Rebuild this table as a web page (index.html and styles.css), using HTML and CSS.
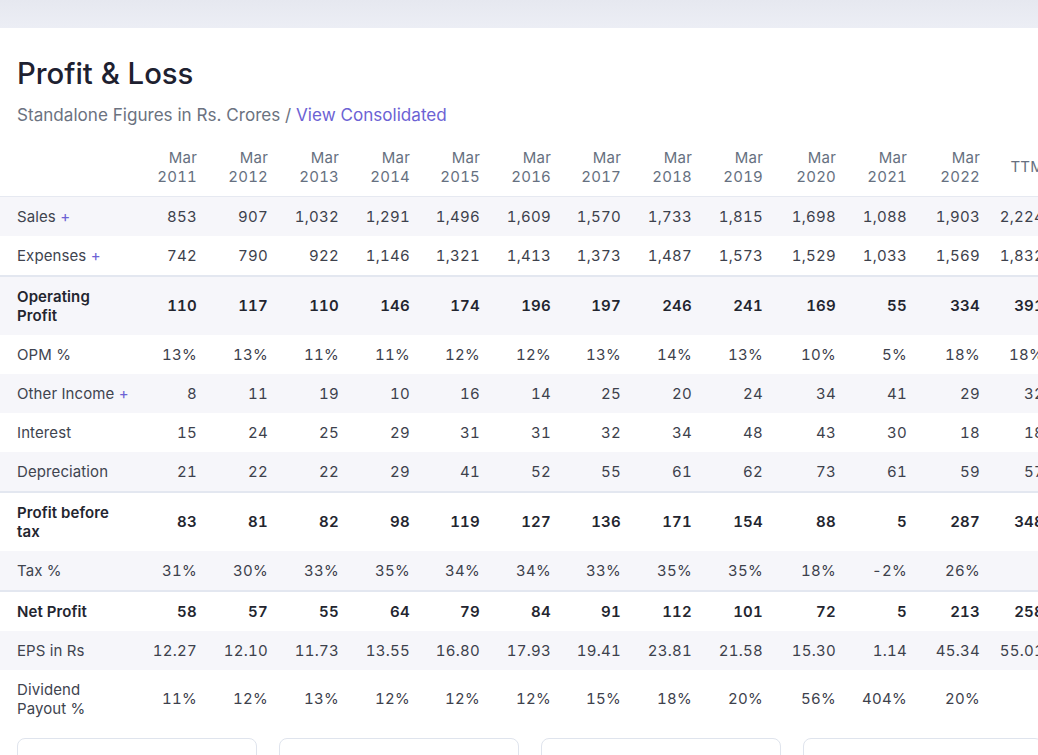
FILE: index.html
```html
<!DOCTYPE html>
<html>
<head>
<meta charset="utf-8">
<link rel="stylesheet" href="styles.css">
</head>
<body>
<div class="topbar"></div>
<section class="card">
  <h2 class="title">Profit &amp; Loss</h2>
  <p class="subtitle">Standalone Figures in Rs. Crores / <a class="link">View Consolidated</a></p>
  <div class="table-wrap">
    <table class="data">
      <colgroup>
        <col style="width:141px"><col style="width:71px"><col style="width:71px"><col style="width:71px"><col style="width:71px"><col style="width:70px"><col style="width:71px"><col style="width:70px"><col style="width:71px"><col style="width:71px"><col style="width:73px"><col style="width:71px"><col style="width:73px"><col style="width:64px">
      </colgroup>
      <thead>
        <tr>
          <th class="label"></th>
          <th>Mar<br>2011</th><th>Mar<br>2012</th><th>Mar<br>2013</th><th>Mar<br>2014</th><th>Mar<br>2015</th><th>Mar<br>2016</th><th>Mar<br>2017</th><th>Mar<br>2018</th><th>Mar<br>2019</th><th>Mar<br>2020</th><th>Mar<br>2021</th><th>Mar<br>2022</th><th>TTM</th>
        </tr>
      </thead>
      <tbody>
        <tr class="stripe">
          <td class="label">Sales <span class="plus">+</span></td>
          <td>853</td><td>907</td><td>1,032</td><td>1,291</td><td>1,496</td><td>1,609</td><td>1,570</td><td>1,733</td><td>1,815</td><td>1,698</td><td>1,088</td><td>1,903</td><td>2,224</td>
        </tr>
        <tr>
          <td class="label">Expenses <span class="plus">+</span></td>
          <td>742</td><td>790</td><td>922</td><td>1,146</td><td>1,321</td><td>1,413</td><td>1,373</td><td>1,487</td><td>1,573</td><td>1,529</td><td>1,033</td><td>1,569</td><td>1,832</td>
        </tr>
        <tr class="stripe strong sep">
          <td class="label">Operating Profit</td>
          <td>110</td><td>117</td><td>110</td><td>146</td><td>174</td><td>196</td><td>197</td><td>246</td><td>241</td><td>169</td><td>55</td><td>334</td><td>391</td>
        </tr>
        <tr>
          <td class="label">OPM %</td>
          <td>13%</td><td>13%</td><td>11%</td><td>11%</td><td>12%</td><td>12%</td><td>13%</td><td>14%</td><td>13%</td><td>10%</td><td>5%</td><td>18%</td><td>18%</td>
        </tr>
        <tr class="stripe">
          <td class="label">Other Income <span class="plus">+</span></td>
          <td>8</td><td>11</td><td>19</td><td>10</td><td>16</td><td>14</td><td>25</td><td>20</td><td>24</td><td>34</td><td>41</td><td>29</td><td>32</td>
        </tr>
        <tr>
          <td class="label">Interest</td>
          <td>15</td><td>24</td><td>25</td><td>29</td><td>31</td><td>31</td><td>32</td><td>34</td><td>48</td><td>43</td><td>30</td><td>18</td><td>18</td>
        </tr>
        <tr class="stripe">
          <td class="label">Depreciation</td>
          <td>21</td><td>22</td><td>22</td><td>29</td><td>41</td><td>52</td><td>55</td><td>61</td><td>62</td><td>73</td><td>61</td><td>59</td><td>57</td>
        </tr>
        <tr class="strong sep">
          <td class="label">Profit before tax</td>
          <td>83</td><td>81</td><td>82</td><td>98</td><td>119</td><td>127</td><td>136</td><td>171</td><td>154</td><td>88</td><td>5</td><td>287</td><td>348</td>
        </tr>
        <tr class="stripe">
          <td class="label">Tax %</td>
          <td>31%</td><td>30%</td><td>33%</td><td>35%</td><td>34%</td><td>34%</td><td>33%</td><td>35%</td><td>35%</td><td>18%</td><td>-2%</td><td>26%</td><td></td>
        </tr>
        <tr class="strong sep">
          <td class="label">Net Profit</td>
          <td>58</td><td>57</td><td>55</td><td>64</td><td>79</td><td>84</td><td>91</td><td>112</td><td>101</td><td>72</td><td>5</td><td>213</td><td>258</td>
        </tr>
        <tr class="stripe">
          <td class="label">EPS in Rs</td>
          <td>12.27</td><td>12.10</td><td>11.73</td><td>13.55</td><td>16.80</td><td>17.93</td><td>19.41</td><td>23.81</td><td>21.58</td><td>15.30</td><td>1.14</td><td>45.34</td><td>55.01</td>
        </tr>
        <tr>
          <td class="label">Dividend Payout %</td>
          <td>11%</td><td>12%</td><td>13%</td><td>12%</td><td>12%</td><td>12%</td><td>15%</td><td>18%</td><td>20%</td><td>56%</td><td>404%</td><td>20%</td><td></td>
        </tr>
      </tbody>
    </table>
  </div>
  <div class="cards">
    <div class="mini"></div>
    <div class="mini"></div>
    <div class="mini"></div>
    <div class="mini"></div>
  </div>
</section>
</body>
</html>
```
FILE: styles.css
```css
html, body {
  margin: 0;
  padding: 0;
  background: #ffffff;
  overflow: hidden;
}
body {
  font-family: Inter, "Noto Sans", sans-serif;
  color: #3a3f4b;
  width: 1038px;
  height: 755px;
}
.topbar {
  height: 28px;
  background: linear-gradient(180deg, #e6e8f0 0%, #eceef5 100%);
  box-shadow: 0 1px 2px rgba(30, 40, 80, 0.04);
}
.card {
  background: #fff;
  padding-top: 28px;
}
.title {
  margin: 0;
  padding-left: 17px;
  font-size: 29.3px;
  line-height: 35px;
  font-weight: 500;
  color: #1e2130;
}
.subtitle {
  margin: 12px 0 0;
  padding-left: 17px;
  font-size: 17.1px;
  line-height: 24px;
  color: #6b7280;
}
.link {
  color: #6c62d4;
  text-decoration: none;
}
.table-wrap {
  margin-top: 10.5px;
  overflow: hidden;
  width: 1038px;
}
.data {
  table-layout: fixed;
  border-collapse: collapse;
  width: 1059px;
  font-size: 15px;
  line-height: 19px;
  font-feature-settings: "tnum" 1;
  font-variant-numeric: tabular-nums;
}
.data th, .data td {
  padding: 10px 15px 10px 0;
  text-align: right;
  white-space: nowrap;
  vertical-align: middle;
}
.data th {
  font-weight: 400;
  color: #667080;
  border-bottom: 1px solid #e6e9f1;
  letter-spacing: 0.2px;
}
.data td {
  color: #3d414c;
  letter-spacing: 0.25px;
}
.data .label {
  text-align: left;
  padding-left: 17px;
  padding-right: 10px;
  white-space: normal;
  letter-spacing: 0.1px;
  font-feature-settings: normal;
  font-variant-numeric: normal;
  color: #40444f;
}
.stripe td {
  background: #f6f6fa;
}
.strong td,
.data .strong .label {
  font-weight: 600;
  color: #23252f;
}
.sep td {
  border-top: 2px solid #e3e7f0;
}
.plus {
  color: #6c62d4;
  font-weight: 400;
}
.cards {
  display: flex;
  gap: 22px;
  padding: 0 17px;
  margin-top: 10.5px;
}
.mini {
  flex: 0 0 240px;
  height: 120px;
  border: 1px solid #dfe4ed;
  border-radius: 8px;
  box-sizing: border-box;
}
```
